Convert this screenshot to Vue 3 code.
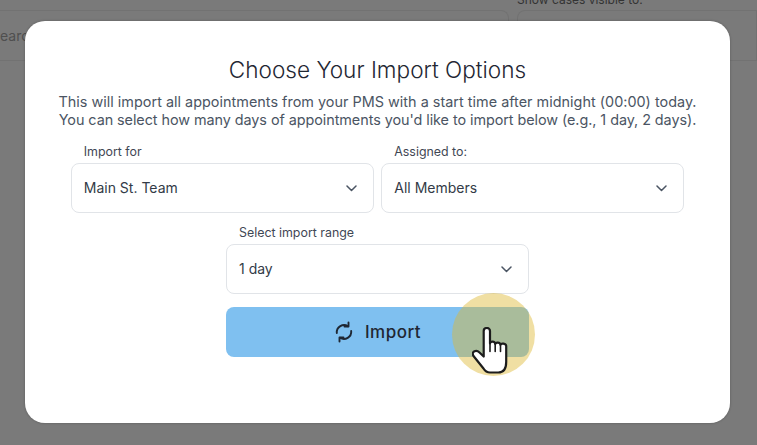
<script setup>
const top = [
  { label: 'Import for', value: 'Main St. Team' },
  { label: 'Assigned to:', value: 'All Members' },
]
</script>

<template>
  <div class="page">
    <div class="backdrop">
      <div class="bg-filter">
        <div class="bg-left"><span class="bg-search">Search</span></div>
        <div class="bg-right">
          <span class="bg-label">Show cases visible to:</span>
          <div class="bg-input"></div>
        </div>
      </div>
    </div>

    <section class="modal">
      <h1 class="title">Choose Your Import Options</h1>
      <p class="desc">
        <span class="line-one">This will import all appointments from your PMS with a start time after midnight (00:00) today.</span>
        <span class="line-two">You can select how many days of appointments you'd like to import below (e.g., 1 day, 2 days).</span>
      </p>

      <div class="row">
        <div v-for="f in top" :key="f.label" class="field">
          <label class="label">{{ f.label }}</label>
          <div class="select">
            <span class="value">{{ f.value }}</span>
            <svg class="chev" width="11" height="7" viewBox="0 0 11 7"><path d="M1 1l4.500 4.500L10 1" fill="none" stroke="#4b5563" stroke-width="1.500" stroke-linecap="round" stroke-linejoin="round"/></svg>
          </div>
        </div>
      </div>

      <div class="field range">
        <label class="label">Select import range</label>
        <div class="select">
          <span class="value">1 day</span>
          <svg class="chev" width="11" height="7" viewBox="0 0 11 7"><path d="M1 1l4.500 4.500L10 1" fill="none" stroke="#4b5563" stroke-width="1.500" stroke-linecap="round" stroke-linejoin="round"/></svg>
        </div>
      </div>

      <button class="import" type="button">
        <svg width="20" height="22" viewBox="0 0 20 22" fill="none" stroke="#1f2733" stroke-width="1.900" stroke-linecap="round" stroke-linejoin="round">
          <path d="M2.800 12a7.300 7.300 0 0 1 11.200-6.800"/>
          <path d="M17.200 10a7.300 7.300 0 0 1-11.200 6.800"/>
          <path d="M14.500 1.500v4h-4"/>
          <path d="M5.500 20.500v-4h4"/>
        </svg>
        <span>Import</span>
      </button>

      <div class="pointer">
        <svg width="36" height="47" viewBox="0 0 36 47">
          <path d="M11.700 4c0-4 6.300-4 6.300 0v12.500c.2-2.500 5-2.500 5.200.5.300-2 5-2 5.300.8.400-2 5.700-1.500 5.700 1.200V35c0 7-3 10.500-8 10.500H18c-3 0-5-1.500-6.500-4L1.500 29c-1.500-2.500-.5-4 1-4.700 2-.9 3.500-.2 5 1.200l4.200 4z" fill="#fff" stroke="#1c1c1c" stroke-width="2.200" stroke-linejoin="round"/>
          <path d="M18 16.500v8M23.200 17v7.500M28.500 17.800v6.700" fill="none" stroke="#1c1c1c" stroke-width="1.600" stroke-linecap="round"/>
        </svg>
      </div>
    </section>
  </div>
</template>

<style>
html, body { margin: 0; padding: 0; }
</style>

<style scoped>
.page {
  position: relative;
  width: 757px;
  height: 445px;
  overflow: hidden;
  background: #7a7a7a;
  font-family: "Inter", "Liberation Sans", sans-serif;
}
.bg-filter {
  display: flex;
  gap: 8px;
  height: 60px;
  border-bottom: 1px solid #727272;
  box-sizing: content-box;
}
.bg-left {
  width: 519px;
  margin-left: -10px;
  margin-top: 10px;
  height: 50px;
  box-sizing: border-box;
  border: 1px solid #727272;
  border-radius: 8px;
  border-bottom: none;
  color: #4f4f4f;
  font-size: 14px;
  line-height: 50px;
}
.bg-right { flex: 1; position: relative; }
.bg-label {
  position: absolute;
  left: 0;
  top: -7px;
  font-size: 12px;
  line-height: 14px;
  color: #333;
  white-space: nowrap;
}
.bg-input {
  margin-top: 10px;
  height: 50px;
  box-sizing: border-box;
  border: 1px solid #727272;
  border-bottom: none;
  border-radius: 8px 0 0 0;
}
.modal {
  position: absolute;
  left: 25px;
  top: 21px;
  width: 705px;
  height: 402px;
  box-sizing: border-box;
  background: #fff;
  border-radius: 20px;
  box-shadow: 0 0 2px 1px rgba(0, 0, 0, 0.12);
  display: flex;
  flex-direction: column;
  align-items: center;
  padding-top: 35px;
}
.title {
  margin: 0;
  font-size: 22.600px;
  line-height: 28px;
  font-weight: 300;
  color: #1f2733;
}
.desc {
  margin: 9px 0 0;
  text-align: center;
  font-size: 14.400px;
  line-height: 18px;
  color: #4b5563;
  white-space: nowrap;
}
.line-one, .line-two { display: block; }
.line-one { letter-spacing: 0.02px; }
.line-two { letter-spacing: -0.06px; }
.row {
  display: flex;
  gap: 7.500px;
  margin-top: 15px;
}
.field { width: 303px; }
.label {
  display: block;
  font-size: 12.400px;
  line-height: 16px;
  color: #3f4754;
  padding-left: 13px;
  margin-bottom: 3px;
}
.select {
  height: 50px;
  box-sizing: border-box;
  border: 1px solid #e1e4e8;
  border-radius: 8px;
  display: flex;
  align-items: center;
  justify-content: space-between;
  padding: 0 16px 0 12px;
  font-size: 14px;
  color: #333b47;
}
.value { margin-bottom: 2px; }
.range { margin-top: 12px; }
.import {
  width: 303px;
  height: 50px;
  margin-top: 13px;
  border: 0;
  border-radius: 8px;
  background: #7fc0f0;
  display: flex;
  align-items: center;
  justify-content: center;
  gap: 11px;
  font-family: inherit;
  font-size: 17px;
  font-weight: 500;
  letter-spacing: 0.5px;
  color: #1f2733;
  padding: 0;
}
.pointer {
  position: absolute;
  left: 427px;
  top: 272px;
  width: 83px;
  height: 83px;
  border-radius: 50%;
  background: rgba(222, 184, 50, 0.45);
}
.pointer svg {
  position: absolute;
  left: 20px;
  top: 34px;
}
</style>
